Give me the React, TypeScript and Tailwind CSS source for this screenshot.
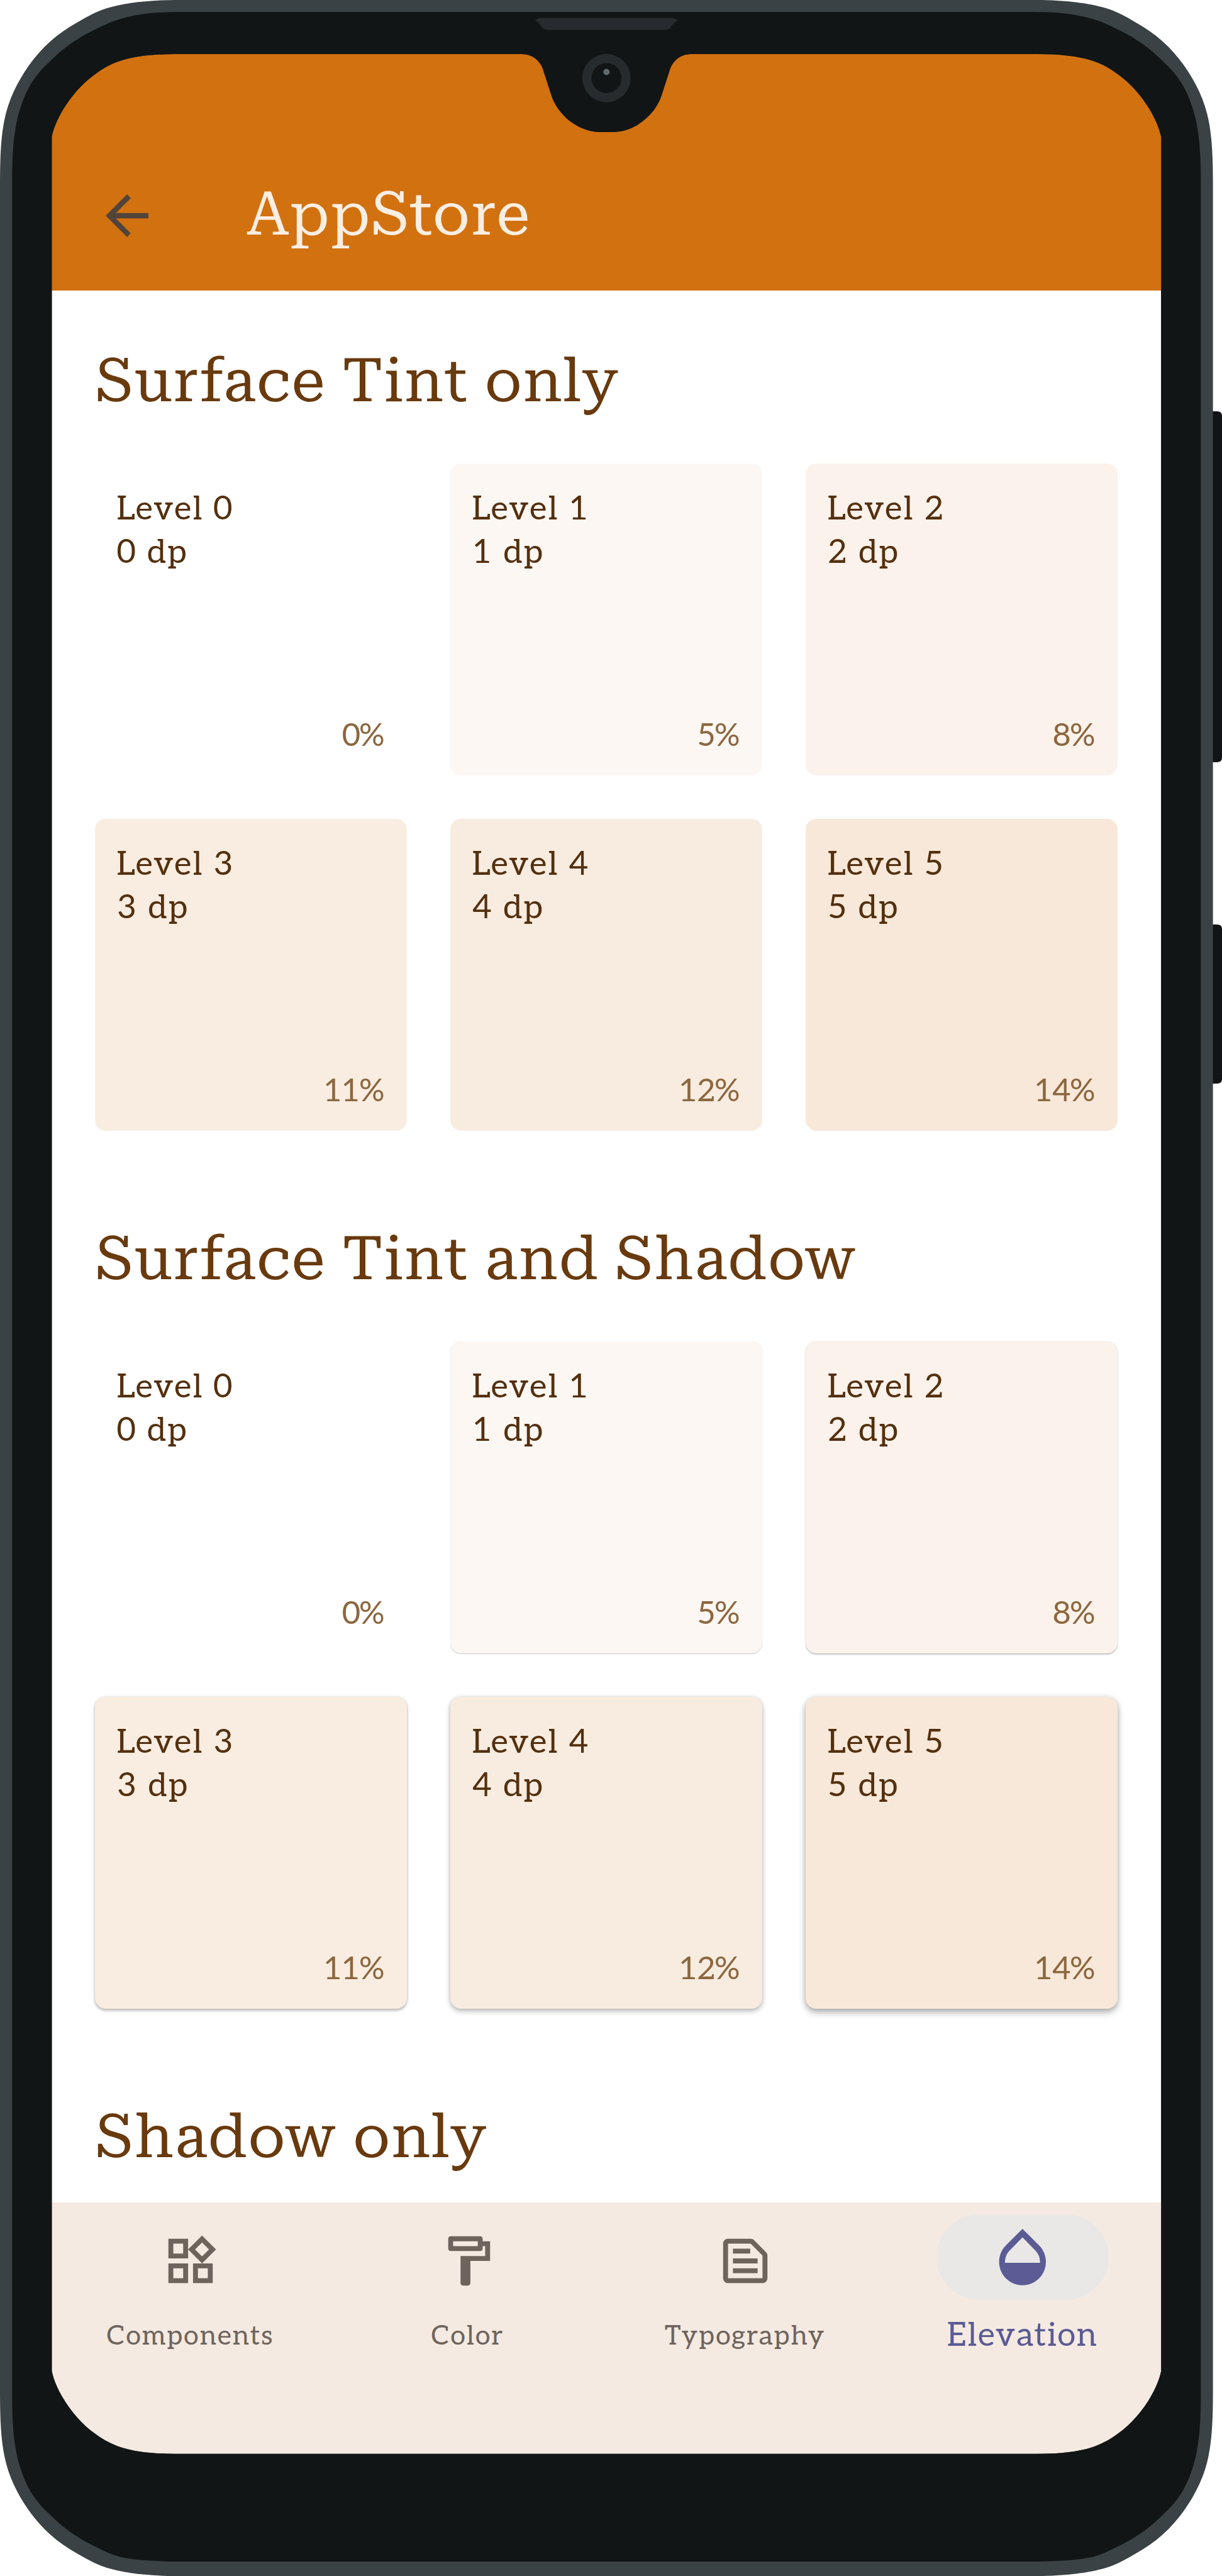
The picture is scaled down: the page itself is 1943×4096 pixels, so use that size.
import type { ReactNode } from "react";

type Point = [number, number];

const CENTER = 964.3;

const casingCorner: Point[] = [
  [0, 296], [0, 255], [1, 220], [7, 191], [13, 160], [27, 131], [46, 104], [66, 76], [91, 53], [124, 35],
  [139, 26], [154, 18], [170, 13], [197, 5], [235, 0], [280, 0],
];
const bezelTopCorner: Point[] = [
  [19.2, 290], [19.2, 250], [21, 218], [28, 187], [33, 168], [38, 154], [46, 139], [55, 122], [67, 109], [81, 96],
  [101, 76], [124, 60], [149, 48], [163, 41], [177, 34], [192, 30], [218, 22], [250, 19], [285, 19],
];
const bezelBottomCorner: Point[] = [
  ...bezelTopCorner.slice(0, 15),
  [192, 30], [218, 25], [250, 23], [285, 23],
];
const screenCorner: Point[] = [
  [82.4, 217.5], [89, 185], [118, 141], [152, 117.5], [165, 108], [178, 101], [192, 96.6], [215, 89], [245, 86.1], [279, 86.1],
];

const flipX = (points: Point[]): Point[] => points.map(([x, y]) => [2 * CENTER - x, y]);
const flipY = (points: Point[], sum: number): Point[] => points.map(([x, y]) => [x, sum - y]);
const curve = (points: Point[]) => `${points[0].join(" ")}C${points.slice(1).map((p) => p.join(" ")).join(" ")}`;

function outline(top: Point[], bottom: Point[], sum: number, topEdge = "") {
  const low = flipY(bottom, sum);
  return `M${curve(top)}${topEdge}L${curve([...flipX(top)].reverse())}L${curve(flipX(low))}L${curve([...low].reverse())}Z`;
}

const notch =
  "H829.9C845 86.1 857 95 862.6 108L876.8 152C886 181 918 210 955 210H973.6C1010.6 210 1042.6 181 1051.8 152L1066 108C1071.6 95 1083.6 86.1 1098.7 86.1";

const casing = outline(casingCorner, casingCorner, 4096);
const bezel = outline(bezelTopCorner, bezelBottomCorner, 4096);
const opening = outline(screenCorner, screenCorner, 3987.8, notch);

function DeviceFrame() {
  return (
    <svg viewBox="0 0 1943 4096" className="pointer-events-none absolute inset-0 h-[4096px] w-[1943px]" aria-hidden="true">
      <path d="M1920 654H1935Q1943 654 1943 661V1205Q1943 1212 1935 1212H1920ZM1920 1470H1935Q1943 1470 1943 1477V1716Q1943 1723 1935 1723H1920Z" fill="#111515" />
      <path d={casing + opening} fillRule="evenodd" fill="#3b4245" />
      <path d={bezel + opening} fillRule="evenodd" fill="#111515" />
      <path d="M850.7 32.4Q855 28.4 861 28.4H1068Q1073 28.6 1077.5 32.4Q1071 36 1068 41Q1064 47.5 1060 47.5H869Q864 47.5 860 41Q856 35 850.7 32.4Z" fill="#262b2d" />
      <circle cx="964.3" cy="124.2" r="38.4" fill="#262b2d" />
      <circle cx="964.3" cy="124.2" r="23.9" fill="#111515" />
      <circle cx="964.3" cy="114.5" r="5" fill="#5f6b6f" />
    </svg>
  );
}

const tints = [
  { level: 0, percent: "0%", tint: "bg-white", shadow: "" },
  { level: 1, percent: "5%", tint: "bg-[#fcf7f3]", shadow: "shadow-[0_1px_1px_rgba(0,0,0,0.2),0_0_1px_rgba(0,0,0,0.12)]" },
  { level: 2, percent: "8%", tint: "bg-[#fbf2eb]", shadow: "shadow-[0_2px_2px_rgba(0,0,0,0.22),0_0_2px_rgba(0,0,0,0.12)]" },
  { level: 3, percent: "11%", tint: "bg-[#f9ede1]", shadow: "shadow-[0_3px_5px_rgba(0,0,0,0.26),0_0_4px_rgba(0,0,0,0.12)]" },
  { level: 4, percent: "12%", tint: "bg-[#f8ece0]", shadow: "shadow-[0_4px_8px_rgba(0,0,0,0.26),0_0_5px_rgba(0,0,0,0.12)]" },
  { level: 5, percent: "14%", tint: "bg-[#f8e8d9]", shadow: "shadow-[0_6px_12px_rgba(0,0,0,0.28),0_1px_8px_rgba(0,0,0,0.14)]" },
];

function Heading({ children }: { children: ReactNode }) {
  return (
    <h2 className="h-[120px] pl-px text-[97px] leading-[120px] tracking-[1.45px] whitespace-nowrap text-[#683a0e] font-['Roboto_Serif','DejaVu_Serif',serif]">
      {children}
    </h2>
  );
}

function LevelGrid({ shadows = false }: { shadows?: boolean }) {
  return (
    <div className="grid grid-cols-[496px_496px_496px] gap-[69px]">
      {tints.map((t) => (
        <div
          key={t.level}
          className={`flex h-[496px] flex-col justify-between rounded-[17px] pt-[39px] pr-[37px] pb-[27px] pl-[35px] ${t.tint} ${shadows ? t.shadow : ""}`}
        >
          <div className="text-[53px] leading-[69.5px] tracking-[2px] text-[#54300f]">
            <div>Level {t.level}</div>
            <div>{t.level} dp</div>
          </div>
          <div className="text-right text-[51px] leading-[69.5px] tracking-[-2px] text-[#8c673f]">{t.percent}</div>
        </div>
      ))}
    </div>
  );
}

const icons = {
  back: "M20 11H7.83l5.59-5.59L12 4l-8 8 8 8 1.41-1.41L7.83 13H20v-2z",
  widgets:
    "M16.66 4.52l2.83 2.83-2.83 2.83-2.83-2.83 2.83-2.83M9 5v4H5V5h4m10 10v4h-4v-4h4M9 15v4H5v-4h4m7.66-13.31L11 7.34 16.66 13l5.66-5.66-5.66-5.65zM11 3H3v8h8V3zm10 10h-8v8h8v-8zm-10 0H3v8h8v-8z",
  paint:
    "M18 4V3c0-.55-.45-1-1-1H5c-.55 0-1 .45-1 1v4c0 .55.45 1 1 1h12c.55 0 1-.45 1-1V6h1v4H9v11c0 .55.45 1 1 1h2c.55 0 1-.45 1-1v-9h8V4h-3zm-2 2H6V4h10v2z",
  snippet:
    "M14.17 5L19 9.83V19H5V5h9.17m0-2H5c-1.1 0-2 .9-2 2v14c0 1.1.9 2 2 2h14c1.1 0 2-.9 2-2V9.83c0-.53-.21-1.04-.59-1.41l-4.83-4.83c-.37-.38-.88-.59-1.41-.59zM7 15h10v2H7v-2zm0-4h10v2H7v-2zm0-4h7v2H7V7z",
  opacity:
    "M17.66 8L12 2.35 6.34 8C4.78 9.56 4 11.64 4 13.64s.78 4.11 2.34 5.67 3.61 2.35 5.66 2.35 4.1-.79 5.66-2.35S20 15.64 20 13.64 19.22 9.56 17.66 8zM6 14c.01-2 .62-3.27 1.76-4.4L12 5.27l4.24 4.38C17.38 10.77 17.99 12 18 14H6z",
};

function Icon({ path, className }: { path: string; className: string }) {
  return (
    <svg viewBox="0 0 24 24" fill="currentColor" className={className} aria-hidden="true">
      <path d={path} />
    </svg>
  );
}

function NavItem({ icon, label }: { icon: string; label: string }) {
  return (
    <button className="flex flex-1 flex-col items-center text-[#6e645d]">
      <span className="mt-[25px] flex h-[136px] items-center">
        <Icon path={icon} className="size-[94px]" />
      </span>
      <span className="mt-[18px] text-[43px] leading-[69px] tracking-[1.9px]">{label}</span>
    </button>
  );
}

export default function App() {
  return (
    <div className="relative h-[4096px] w-[1943px] overflow-hidden bg-white font-['Aleo','Bitter','DejaVu_Serif',serif]">
      <div className="flex h-[3902px] flex-col pt-[86px] pr-[97px] pl-[82px]">
        <header className="flex h-[376px] shrink-0 items-center bg-[#d2710f] pt-[137px] pl-[69px]">
          <Icon path={icons.back} className="size-[102px] shrink-0 text-[#51443b]" />
          <h1 className="ml-[139px] pb-[6px] text-[97px] leading-[120px] tracking-[1.3px] text-[#faeee3] font-['Roboto_Serif','DejaVu_Serif',serif]">
            AppStore
          </h1>
        </header>
        <main className="flex h-[3040px] shrink-0 flex-col overflow-hidden bg-white px-[68.5px]">
          <section className="h-[1396px] shrink-0 pt-[83px]">
            <Heading>Surface Tint only</Heading>
            <div className="mt-[71.5px]">
              <LevelGrid />
            </div>
          </section>
          <section className="h-[1396px] shrink-0 pt-[83px]">
            <Heading>Surface Tint and Shadow</Heading>
            <div className="mt-[71.5px]">
              <LevelGrid shadows />
            </div>
          </section>
          <section className="shrink-0 pt-[83px]">
            <Heading>Shadow only</Heading>
          </section>
        </main>
        <nav className="flex h-[400px] shrink-0 items-start bg-[#f4eae1]">
          <NavItem icon={icons.widgets} label="Components" />
          <NavItem icon={icons.paint} label="Color" />
          <NavItem icon={icons.snippet} label="Typography" />
          <button className="flex flex-1 flex-col items-center text-[#5b5b95]">
            <span className="mt-[19px] flex h-[136px] w-[274px] items-center justify-center rounded-full bg-[#e9e8e6]">
              <Icon path={icons.opacity} className="size-[111.6px]" />
            </span>
            <span className="mt-[22px] text-[52.5px] leading-[69px] tracking-[1.6px]">Elevation</span>
          </button>
        </nav>
      </div>
      <DeviceFrame />
    </div>
  );
}
